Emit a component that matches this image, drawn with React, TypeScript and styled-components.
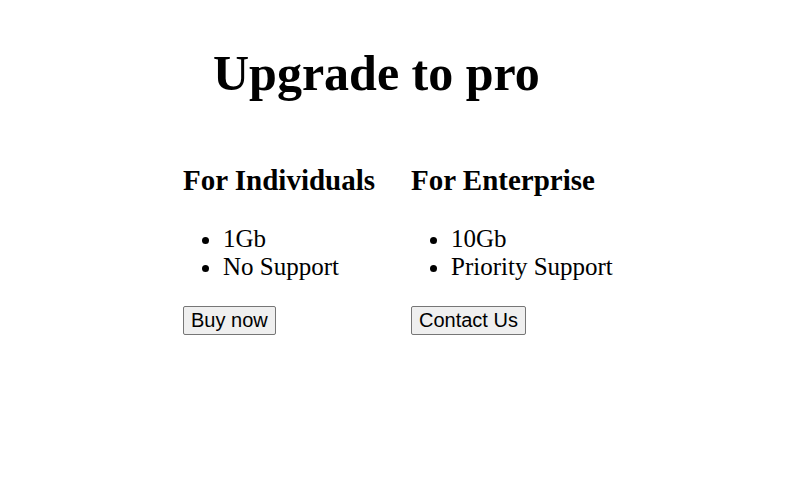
import React from "react";
import styled, { createGlobalStyle } from "styled-components";

const Global = createGlobalStyle`
  html, body { margin: 0; padding: 0; background: #fff; }
  body { font-family: "Liberation Serif", "Times New Roman", serif; color: #000; }
`;

const Page = styled.div`
  padding: 46px 0 0 183px;
`;

const Title = styled.h1`
  margin: 0;
  padding-left: 30px;
  font-size: 50px;
  font-weight: bold;
  line-height: 55px;
`;

const Plans = styled.div`
  display: flex;
  margin-top: 63px;
`;

const Plan = styled.section`
  width: 228px;
  display: flex;
  flex-direction: column;
  align-items: flex-start;
`;

const PlanName = styled.h3`
  margin: 0 0 29px;
  font-size: 29px;
  font-weight: bold;
  line-height: 32px;
  white-space: nowrap;
`;

const Features = styled.ul`
  margin: 0 0 25px;
  padding-left: 40px;
  font-size: 25px;
  line-height: 28px;
  list-style: disc;
`;

const Feature = styled.li`
  white-space: nowrap;
`;

const Button = styled.button`
  font-family: "Liberation Sans", Arial, sans-serif;
  font-size: 20px;
  line-height: 23px;
  padding: 1px 7px;
  color: #000;
  background: #efefef;
  border: 1px solid #767676;
  border-radius: 2px;
  box-sizing: border-box;
  height: 29px;
`;

const plans = [
  { name: "For Individuals", features: ["1Gb", "No Support"], cta: "Buy now" },
  { name: "For Enterprise", features: ["10Gb", "Priority Support"], cta: "Contact Us" },
];

export default function App() {
  return (
    <>
      <Global />
      <Page>
        <Title>Upgrade to pro</Title>
        <Plans>
          {plans.map((p) => (
            <Plan key={p.name}>
              <PlanName>{p.name}</PlanName>
              <Features>
                {p.features.map((f) => (
                  <Feature key={f}>{f}</Feature>
                ))}
              </Features>
              <Button>{p.cta}</Button>
            </Plan>
          ))}
        </Plans>
      </Page>
    </>
  );
}
